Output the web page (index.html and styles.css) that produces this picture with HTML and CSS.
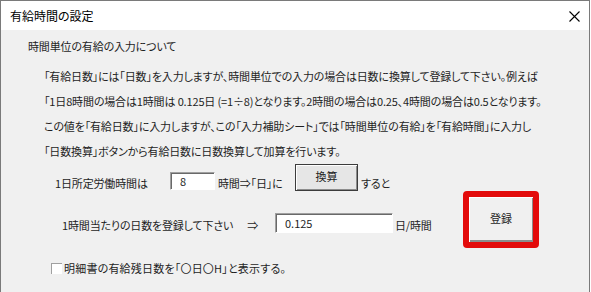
FILE: index.html
```html
<!DOCTYPE html>
<html lang="ja">
<head>
    <meta charset="UTF-8">
    <meta name="viewport" content="width=device-width, initial-scale=1.0">
    <title>有給時間の設定</title>
    <link rel="stylesheet" href="styles.css">
</head>
<body>

    <div class="dialog">
        <div class="title-bar">
            <span class="title">有給時間の設定</span>
            <span class="close">
                <svg width="11" height="11" viewBox="0 0 11 11">
                    <path d="M0.5 0.5 L10.5 10.5 M10.5 0.5 L0.5 10.5" stroke="#000" stroke-width="1.1" fill="none"/>
                </svg>
            </span>
        </div>

        <div class="dialog-body">
            <div class="heading">時間単位の有給の入力について</div>

            <p class="note">
                「有給日数」には「日数」を入力しますが、時間単位での入力の場合は日数に換算して登録して下さい。例えば<br>
                「1日8時間の場合は1時間は 0.125日 (=1÷8)となります。2時間の場合は0.25、4時間の場合は0.5となります。<br>
                この値を「有給日数」に入力しますが、この「入力補助シート」では「時間単位の有給」を「有給時間」に入力し<br>
                「日数換算」ボタンから有給日数に日数換算して加算を行います。
            </p>

            <div class="form">
                <div class="fields">
                    <div class="row row-hours">
                        <span class="label lb-hours">1日所定労働時間は</span>
                        <input type="text" class="textbox tb-hours" value="8">
                        <span class="label lb-unit">時間⇒「日」に</span>
                        <button class="btn btn-calc">換算</button>
                        <span class="label">すると</span>
                    </div>
                    <div class="row row-days">
                        <span class="label lb-days">1時間当たりの日数を登録して下さい<span class="arrow">⇒</span></span>
                        <input type="text" class="textbox tb-days" value="0.125">
                        <span class="label">日/時間</span>
                    </div>
                </div>
                <div class="register">
                    <button class="btn btn-register">登録</button>
                </div>
            </div>

            <label class="check-row">
                <span class="checkbox"></span>
                <span class="label">明細書の有給残日数を「〇日〇H」と表示する。</span>
            </label>
        </div>
    </div>

</body>
</html>
```

FILE: styles.css
```css
body {
    margin: 0;
    padding: 0;
    background-color: #ffffff;
    font-family: "Noto Sans CJK JP", "Noto Sans", sans-serif;
    font-size: 12px;
    color: #1e1e1e;
    font-feature-settings: "palt";
}

.dialog {
    width: 588px;
    height: 291px;
    border: 1px solid #7a7a7a;
    border-bottom: none;
    display: flex;
    flex-direction: column;
}

.title-bar {
    height: 29px;
    background-color: #ffffff;
    display: flex;
    align-items: center;
    justify-content: space-between;
    padding: 0 9px 0 9px;
}

.title {
    font-size: 12px;
    color: #000000;
}

.close {
    display: flex;
    margin-top: 1px;
}

/* dialog content uses a smaller face, like the form font */
.dialog-body {
    flex-grow: 1;
    background-color: #f0f0f0;
    padding: 8px 0 0 27px;
    font-size: 11px;
    letter-spacing: -0.15px;
}

.heading {
    line-height: 16px;
}

.note {
    margin: 10px 0 0 16px;
    line-height: 25px;
    white-space: nowrap;
}

.form {
    display: flex;
}

.fields {
    width: 434px;
}

.row {
    display: flex;
    align-items: flex-end;
    white-space: nowrap;
}

.label {
    line-height: 16px;
}

.row-hours {
    padding-left: 27px;
    height: 27px;
}

.lb-hours {
    width: 115px;
}

.lb-unit {
    width: 77px;
}

.row-days {
    padding-left: 34px;
    margin-top: 22px;
}

.lb-days {
    width: 213px;
}

.arrow {
    margin-left: 14px;
}

.textbox {
    font-family: inherit;
    font-size: 11px;
    color: #1e1e1e;
    background: #ffffff;
    border: 1px solid #ffffff;
    border-top-color: #a0a0a0;
    border-left-color: #a0a0a0;
    box-shadow: inset 1px 1px 0 #696969;
    padding: 0 0 0 9px;
    outline: none;
    box-sizing: border-box;
}

.tb-hours {
    width: 45px;
    height: 18px;
    margin: 0 3px 1px 0;
}

.tb-days {
    width: 118px;
    height: 20px;
    margin: 0 2px 0 0;
}

.btn {
    font-family: inherit;
    font-size: 11px;
    color: #1e1e1e;
    background-color: #e6e6e6;
    box-sizing: border-box;
    padding: 0;
}

.btn-calc {
    width: 63px;
    height: 27px;
    margin: 0 3px 0 0;
    border: 1px solid #3c3c3c;
    box-shadow: inset 1px 1px 0 #ffffff, inset -1px -1px 0 #8c8c8c;
    line-height: 20px;
    padding-bottom: 4px;
}

.register {
    margin: 27px 0 0 1px;
    border: 6px solid #e30b0b;
    border-radius: 4px;
    width: 64px;
    height: 45px;
}

.btn-register {
    width: 64px;
    height: 45px;
    border: none;
    background-color: #f0f0f0;
    box-shadow: inset 1px 1px 0 #ffffff, inset -1px -2px 0 #8c8c8c;
    padding-bottom: 3px;
}

.check-row {
    display: flex;
    align-items: center;
    margin: 12px 0 0 23px;
}

.checkbox {
    width: 11px;
    height: 11px;
    box-sizing: border-box;
    background-color: #ffffff;
    border-top: 1px solid #a0a0a0;
    border-left: 1px solid #a0a0a0;
    margin-right: 2px;
    letter-spacing: 0.2px;
}

.check-row .label {
    letter-spacing: 0.2px;
}
```
